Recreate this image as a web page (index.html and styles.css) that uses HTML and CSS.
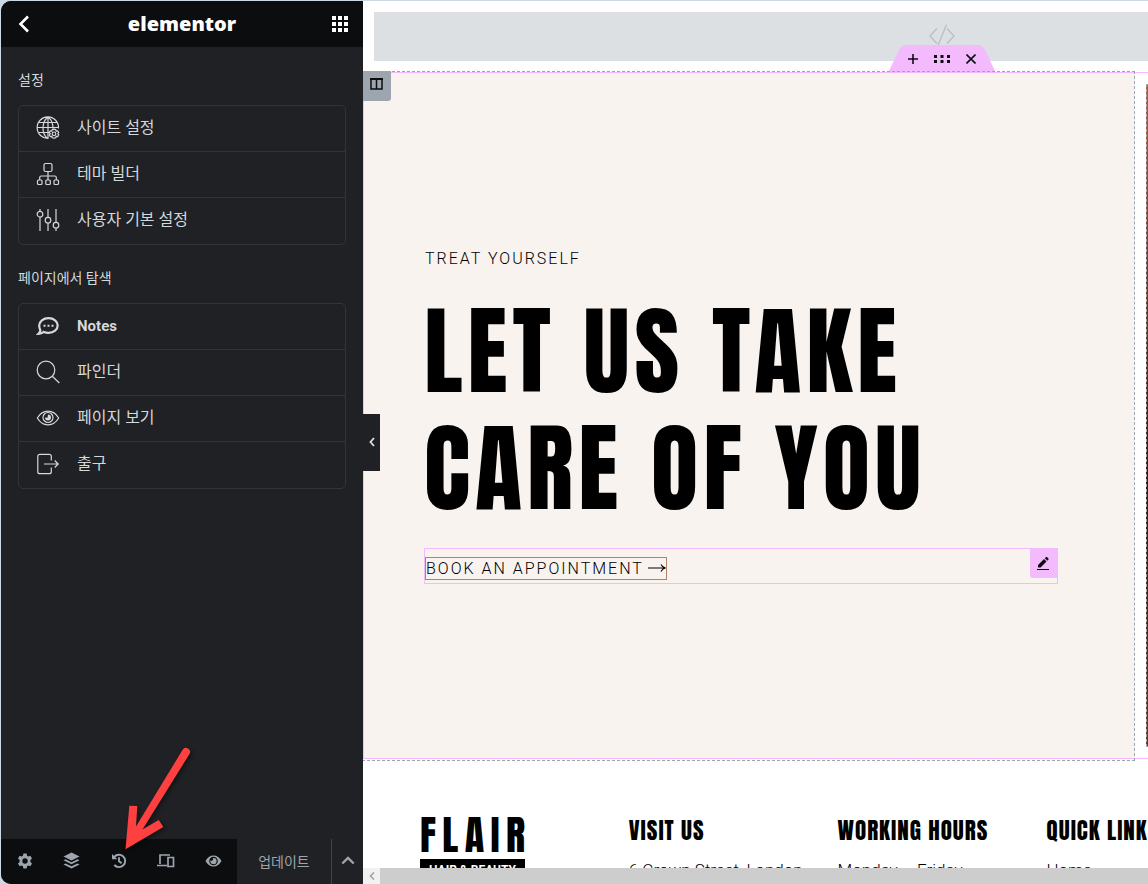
FILE: index.html
```html
<!DOCTYPE html>
<html lang="ko">
<head>
    <meta charset="UTF-8" />
    <meta name="viewport" content="width=device-width, initial-scale=1" />
    <title>Elementor</title>
    <link rel="stylesheet" href="styles.css">
</head>
<body>
<div class="editor">
    <aside class="panel">
        <header class="panel-header">
            <button type="button" class="header-btn" aria-label="Back">
                <svg width="12" height="18" viewBox="0 0 12 18"><path d="M10 1.500L2.500 9l7.500 7.500" fill="none" stroke="#fff" stroke-width="2.600"/></svg>
            </button>
            <span class="brand">elementor</span>
            <button type="button" class="header-btn" aria-label="Widgets">
                <svg width="16" height="16" viewBox="0 0 16 16" fill="#fff"><path d="M0 0h4v4H0zM6 0h4v4H6zM12 0h4v4h-4zM0 6h4v4H0zM6 6h4v4H6zM12 6h4v4h-4zM0 12h4v4H0zM6 12h4v4H6zM12 12h4v4h-4z"/></svg>
            </button>
        </header>

        <nav class="panel-content">
            <h2 class="group-title">설정</h2>
            <ul class="menu">
                <li><a href="#" class="menu-item">
                    <svg class="icon" viewBox="0 0 24 24"><path d="M12.500 22.300A10.700 10.700 0 1 1 22.500 12.500M1.500 11.500h21M3 6.500h18M3 16.500h10M12 1v21.500M12 1C5.500 6 5.500 17 11 22M12 1c4 3 5 7 5 11.500"/><path d="M18 13.200l1.700.4.500 1.500 1.500-.3 1 1.600-.9 1.300.9 1.300-1 1.600-1.500-.3-.5 1.500-1.700.4-1.700-.4-.5-1.500-1.500.3-1-1.600.9-1.300-.9-1.300 1-1.600 1.500.3.500-1.500z"/><circle cx="18" cy="17.800" r="1.800"/></svg>
                    <span>사이트 설정</span>
                </a></li>
                <li><a href="#" class="menu-item">
                    <svg class="icon" viewBox="0 0 24 24"><rect x="8" y="1.500" width="8" height="8" rx="1.500"/><rect x="1.500" y="18" width="4.500" height="4.500" rx="1"/><rect x="9.800" y="18" width="4.500" height="4.500" rx="1"/><rect x="18" y="18" width="4.500" height="4.500" rx="1"/><path d="M12 9.500V18M3.700 18v-2.500a1.500 1.500 0 0 1 1.500-1.500h13.600a1.500 1.500 0 0 1 1.500 1.500V18"/></svg>
                    <span>테마 빌더</span>
                </a></li>
                <li><a href="#" class="menu-item">
                    <svg class="icon" viewBox="0 0 24 24"><path d="M4 1v2.500M4 9v14M12 1v8.500M12 15v8M20 1v13.500M20 20v3"/><circle cx="4" cy="6.200" r="2.800"/><circle cx="12" cy="12.200" r="2.800"/><circle cx="20" cy="17.200" r="2.800"/></svg>
                    <span>사용자 기본 설정</span>
                </a></li>
            </ul>

            <h2 class="group-title">페이지에서 탐색</h2>
            <ul class="menu">
                <li><a href="#" class="menu-item">
                    <svg class="icon" viewBox="0 0 24 24"><path d="M12.500 4.200c5.300 0 9.200 3.200 9.200 7.300s-3.900 7.300-9.200 7.300c-1.800 0-3.300-.3-4.700-.9-1.300 1.100-3.200 1.900-5.300 1.900 1-1 1.700-2.300 1.900-3.500-.8-1.300-1.200-3-1.200-4.800 0-4.100 4-7.300 9.300-7.300z" stroke-width="2.200"/><path d="M7.500 10.700h2v2h-2zM11.500 10.700h2v2h-2zM15.500 10.700h2v2h-2z" fill="#d5d8dc" stroke="none"/></svg>
                    <span class="strong">Notes</span>
                </a></li>
                <li><a href="#" class="menu-item">
                    <svg class="icon" viewBox="0 0 24 24"><circle cx="10" cy="10" r="8.800"/><path d="M16.300 16.300l7 6.700"/></svg>
                    <span>파인더</span>
                </a></li>
                <li><a href="#" class="menu-item">
                    <svg class="icon" viewBox="0 0 24 24"><path d="M1.300 12C4 7.500 8 5.200 12 5.200S20 7.500 22.700 12C20 16.500 16 18.800 12 18.800S4 16.500 1.300 12z"/><circle cx="12" cy="11.500" r="5"/><path d="M12 8.500a3 3 0 1 1-3 3l2.500.3z" fill="#d5d8dc" stroke="none"/></svg>
                    <span>페이지 보기</span>
                </a></li>
                <li><a href="#" class="menu-item">
                    <svg class="icon" viewBox="0 0 24 24"><path d="M15.300 8.500V4.300a2 2 0 0 0-2-2H3.800a2 2 0 0 0-2 2v15.400a2 2 0 0 0 2 2h9.500a2 2 0 0 0 2-2v-4.200M8 12h14M18.700 8.500l3.500 3.500-3.500 3.500"/></svg>
                    <span>출구</span>
                </a></li>
            </ul>
        </nav>

        <footer class="panel-footer">
            <div class="tools">
                <button type="button" aria-label="Settings">
                    <svg width="16" height="16" viewBox="0 0 16 16"><path fill-rule="evenodd" d="M6.400.6h3.200l.5 2.100 1.200.7 2.100-.7 1.600 2.800-1.600 1.500v1.900l1.600 1.500-1.600 2.800-2.100-.6-1.200.7-.5 2.100H6.400l-.5-2.100-1.200-.7-2.100.6L1 10.400l1.600-1.500V7L1 5.500l1.600-2.800 2.100.7 1.200-.7zM8 5.300a2.700 2.700 0 1 0 0 5.400 2.700 2.700 0 0 0 0-5.400z"/></svg>
                </button>
                <button type="button" aria-label="Navigator">
                    <svg width="17" height="17" viewBox="0 0 17 17"><path d="M8.500.6L16.500 4.500l-8 4-8-4zM2.500 7.300l6 2.900 6-2.900 2 1-8 4-8-4zM2.500 11.400l6 2.900 6-2.900 2 1-8 4-8-4z"/></svg>
                </button>
                <button type="button" aria-label="History">
                    <svg width="16" height="16" viewBox="0 0 16 16"><path d="M3 4.200A6.200 6.200 0 1 1 3.300 12M8 4.300v4l2.600 1.800" fill="none" stroke="#9da5ae" stroke-width="1.900"/><path d="M1 1v5.300h5.300z"/></svg>
                </button>
                <button type="button" aria-label="Responsive mode">
                    <svg width="18" height="14" viewBox="0 0 18 14"><path d="M13 1H3v9M0 11.500h10M11 3.500h5.500v9H11z" fill="none" stroke="#9da5ae" stroke-width="1.700"/></svg>
                </button>
                <button type="button" aria-label="Preview">
                    <svg width="17" height="12" viewBox="0 0 17 12"><path fill-rule="evenodd" d="M.5 6C2.200 2.500 5.200.5 8.500.5s6.300 2 8 5.500c-1.700 3.500-4.700 5.500-8 5.500S2.200 9.500.5 6zM8.500 1.700a4.300 4.300 0 1 0 0 8.600 4.300 4.300 0 0 0 0-8.600z"/><path d="M8.500 2.900a3.100 3.100 0 1 1-3 2.300 1.500 1.500 0 0 0 2.200-2.200z"/></svg>
                </button>
            </div>
            <button type="button" class="update">업데이트</button>
            <button type="button" class="options" aria-label="Save options">
                <svg width="14" height="9" viewBox="0 0 14 9"><path d="M1.300 7.500L7 2l5.700 5.500" fill="none" stroke="#9da5ae" stroke-width="2.400"/></svg>
            </button>
        </footer>

        <button type="button" class="collapse" aria-label="Hide panel">
            <svg width="6" height="10" viewBox="0 0 6 10"><path d="M5 1L1.500 5 5 9" fill="none" stroke="#e0e1e3" stroke-width="1.800"/></svg>
        </button>
    </aside>

    <main class="preview">
        <div class="viewport">
            <div class="page">
                <div class="html-widget">
                    <svg width="26" height="22" viewBox="0 0 26 22"><path d="M8 4.500L1 12l7 7.500M18 4.500l7 7.500-7 7.500M17.500.5l-8.500 21" fill="none" stroke="#babfc5" stroke-width="1.300"/></svg>
                </div>

                <section class="hero">
                    <div class="handle">
                        <svg class="handle-shape" viewBox="0 0 108 28"><path d="M0 28L11 5Q13.500 0 18 0H90Q94.500 0 97 5L108 28z" fill="#f3bafd"/></svg>
                        <button type="button" aria-label="Add section"><svg width="10" height="10" viewBox="0 0 10 10"><path d="M5 0v10M0 5h10" stroke="#0c0d0e" stroke-width="1.600"/></svg></button>
                        <button type="button" aria-label="Edit section"><svg width="16" height="8" viewBox="0 0 16 8" fill="#0c0d0e"><path d="M0 0h3v3H0zM6.500 0h3v3h-3zM13 0h3v3h-3zM0 5h3v3H0zM6.500 5h3v3h-3zM13 5h3v3h-3z"/></svg></button>
                        <button type="button" aria-label="Delete section"><svg width="10" height="10" viewBox="0 0 10 10"><path d="M.5.500l9 9M9.500.500l-9 9" stroke="#0c0d0e" stroke-width="1.600"/></svg></button>
                    </div>

                    <div class="hero-text">
                        <button type="button" class="column-handle" aria-label="Edit column"><svg width="13" height="12" viewBox="0 0 13 12"><path d="M1 1h11v10H1zM6.500 1v10" fill="none" stroke="#0c0d0e" stroke-width="1.500"/><path d="M0 0h13v2H0z" fill="#0c0d0e"/></svg></button>
                        <p class="eyebrow">TREAT YOURSELF</p>
                        <h1>LET US TAKE<br>CARE OF YOU</h1>
                        <div class="widget">
                            <a href="#" class="cta">BOOK AN APPOINTMENT
                                <svg width="18" height="8" viewBox="0 0 18 8"><path d="M0 4h17M13 .5Q14.500 3.500 17.500 4 14.500 4.500 13 7.500" fill="none" stroke="#000" stroke-width="1.100"/></svg>
                            </a>
                            <button type="button" class="edit" aria-label="Edit button"><svg width="12" height="13" viewBox="0 0 12 13" fill="#0c0d0e"><path d="M1 10.500V8L7 2l2.500 2.500-6 6zM7.800 1.200L9 0h1l1.500 1.500v1l-1.200 1.200zM0 12h12v1H0z"/></svg></button>
                        </div>
                    </div>
                    <div class="hero-media"><div class="photo"></div></div>
                </section>

                <div class="site-footer">
                    <div class="logo">
                        <div class="logo-name"><span>F</span><span>L</span><span>A</span><span>I</span><span>R</span></div>
                        <div class="logo-tag">HAIR &amp; BEAUTY</div>
                    </div>
                    <div>
                        <h3>VISIT US</h3>
                        <p>6 Crown Street, London</p>
                    </div>
                    <div>
                        <h3>WORKING HOURS</h3>
                        <p>Monday – Friday</p>
                    </div>
                    <div>
                        <h3>QUICK LINKS</h3>
                        <p>Home</p>
                    </div>
                </div>
            </div>
        </div>
        <div class="scrollbar">
            <button type="button" aria-label="Scroll left"><svg width="6" height="8" viewBox="0 0 6 8"><path d="M5 .5L1.500 4 5 7.500" fill="none" stroke="#a3a3a3" stroke-width="1.600"/></svg></button>
            <div class="thumb"></div>
        </div>
    </main>

    <svg class="pointer" width="80" height="110" viewBox="0 0 80 110"><path d="M62.500 6L16 82.500l1.300-20.500-8-.3L5.500 105.300 43.300 83l-4.600-7L22.500 85.500 69.500 10A4 4 0 0 0 62.500 6z" fill="#ff4040"/></svg>
</div>
</body>
</html>
```

FILE: styles.css
```css
* {
  box-sizing: border-box;
}
body {
  margin: 0;
  background: #ccd9e4;
  font-family: Roboto, "Noto Sans CJK KR", sans-serif;
}
button {
  display: flex;
  align-items: center;
  justify-content: center;
  padding: 0;
  border: none;
  background: none;
  font-family: inherit;
  cursor: pointer;
}
svg {
  display: block;
}
.editor {
  position: relative;
  display: flex;
  height: 100vh;
  padding: 1px 0 0 1px;
  overflow: hidden;
}

/* left panel */
.panel {
  position: relative;
  z-index: 2;
  display: flex;
  flex-direction: column;
  flex: 0 0 362px;
  background: #1f2124;
  border-radius: 10px 0 0 10px;
}
.panel-header {
  display: flex;
  align-items: center;
  justify-content: space-between;
  height: 46px;
  padding: 0 7px;
  background: #0c0d0e;
  border-top-left-radius: 10px;
}
.header-btn {
  width: 32px;
  height: 32px;
}
.brand {
  font-family: "Open Sans", sans-serif;
  font-size: 20px;
  font-weight: 800;
  line-height: 24px;
  color: #fff;
}
.panel-content {
  flex: 1;
  padding: 23px 17px 0;
}
.group-title {
  margin: 0 0 15px;
  font-size: 14px;
  font-weight: 400;
  line-height: 20px;
  color: #d5d8dc;
}
.menu {
  margin: 0 0 23px;
  padding: 0;
  list-style: none;
  border: 1px solid #313438;
  border-radius: 5px;
}
.menu li + li {
  border-top: 1px solid #313438;
}
.menu-item {
  display: flex;
  align-items: center;
  gap: 17px;
  height: 45px;
  padding: 0 17px 2px;
  font-size: 16px;
  line-height: 24px;
  color: #d5d8dc;
  text-decoration: none;
}
.menu li:last-child .menu-item {
  height: 46px;
}
.icon {
  width: 24px;
  height: 24px;
  fill: none;
  stroke: #d5d8dc;
  stroke-width: 1.2;
}
.strong {
  font-size: 15px;
  font-weight: 700;
}
.panel-footer {
  display: flex;
  height: 45px;
}
.panel-footer button {
  padding-bottom: 2px;
}
.tools {
  display: flex;
  width: 236px;
  background: #0c0d0e;
  border-bottom-left-radius: 10px;
}
.tools button {
  flex: 1;
}
.tools svg {
  fill: #9da5ae;
}
.update {
  flex: 1;
  font-size: 14px;
  color: #9da5ae;
}
.options {
  width: 32px;
  border-left: 1px solid #3f444b;
}
.collapse {
  position: absolute;
  top: 50%;
  left: 100%;
  width: 17px;
  height: 57px;
  margin-top: -29px;
  background: #1f2124;
}

/* page preview */
.preview {
  display: flex;
  flex: 1;
  flex-direction: column;
  min-width: 0;
  background: #fff;
}
.viewport {
  flex: 1;
  min-height: 0;
  overflow: hidden;
}
.page {
  min-width: 1158px;
  color: #000;
  font-weight: 300;
}
.html-widget {
  display: flex;
  align-items: center;
  justify-content: center;
  height: 49px;
  margin: 11px;
  padding-bottom: 4px;
  background: #dce0e3;
}
.hero {
  position: relative;
  display: grid;
  grid-template-columns: 2fr 1fr;
  min-height: 687px;
  border: 1px solid #f3bafd;
}
.handle {
  position: absolute;
  top: -28px;
  left: 50%;
  display: flex;
  width: 108px;
  height: 28px;
  margin-left: -54px;
  padding: 0 11px;
}
.handle-shape {
  position: absolute;
  inset: 0;
}
.handle button {
  position: relative;
  flex: 1;
}
.hero-text {
  position: relative;
  display: flex;
  flex-direction: column;
  justify-content: center;
  padding: 0 77px 2px 60px;
  background: #f8f3ef;
}
.hero-text::after {
  content: "";
  position: absolute;
  inset: -2px 0 -3px -2px;
  border: 1px dashed #9da5ae;
  pointer-events: none;
}
.column-handle {
  position: absolute;
  z-index: 1;
  top: -2px;
  left: -1px;
  width: 28px;
  height: 30px;
  padding: 0 1px 4px 0;
  background: #9da5ae;
  border-bottom-right-radius: 3px;
}
.eyebrow {
  margin: 0 0 21px;
  padding-left: 1px;
  font-size: 16px;
  line-height: 26px;
  letter-spacing: 2px;
}
h1 {
  margin: 0 0 21px;
  font-family: Anton, "Liberation Sans Narrow", sans-serif;
  font-size: 97px;
  font-weight: 400;
  line-height: 117px;
  letter-spacing: 5px;
  white-space: nowrap;
}
.widget {
  display: flex;
  align-items: center;
  position: relative;
  height: 36px;
  border: 1px solid #f3bafd;
}
.cta {
  display: flex;
  align-items: center;
  gap: 4px;
  height: 23px;
  margin-top: 5px;
  border: 1px solid #b0836a;
  color: #000;
  font-size: 16px;
  letter-spacing: 2px;
  text-decoration: none;
}
.edit {
  position: absolute;
  top: 0;
  right: 0;
  width: 27px;
  height: 29px;
  background: #f3bafd;
  border-bottom-left-radius: 3px;
}
.hero-media {
  padding: 11px;
}
.photo {
  height: 100%;
  border: 1px dashed #9da5ae;
  background: linear-gradient(#a85c40, #2b1a14 60%, #5b3a28);
}
.site-footer {
  display: grid;
  grid-template-columns: repeat(5, 1fr);
  padding: 57px 57px 40px;
}
.logo {
  width: 105px;
}
.logo-name {
  display: flex;
  justify-content: space-between;
  font-family: Anton, "Liberation Sans Narrow", sans-serif;
  font-size: 40px;
  font-weight: 400;
  line-height: 38px;
}
.logo-tag {
  margin-top: 5px;
  background: #000;
  color: #fff;
  font-size: 12px;
  font-weight: 700;
  line-height: 22px;
  text-align: center;
}
.site-footer h3 {
  margin: 0 0 12px;
  font-family: Anton, "Liberation Sans Narrow", sans-serif;
  font-size: 23px;
  font-weight: 400;
  line-height: 30px;
  letter-spacing: 1px;
  white-space: nowrap;
}
.site-footer p {
  margin: 0;
  font-size: 17px;
  line-height: 24px;
  white-space: nowrap;
}
.scrollbar {
  display: flex;
  height: 16px;
  background: #f1f1f1;
}
.scrollbar button {
  width: 17px;
}
.thumb {
  flex: 1;
  background: #cdcdcd;
}

/* red arrow over the history button */
.pointer {
  position: absolute;
  z-index: 3;
  left: 120px;
  bottom: 30px;
  filter: drop-shadow(2px 2px 2px rgba(0,0,0,0.4));
}
```
